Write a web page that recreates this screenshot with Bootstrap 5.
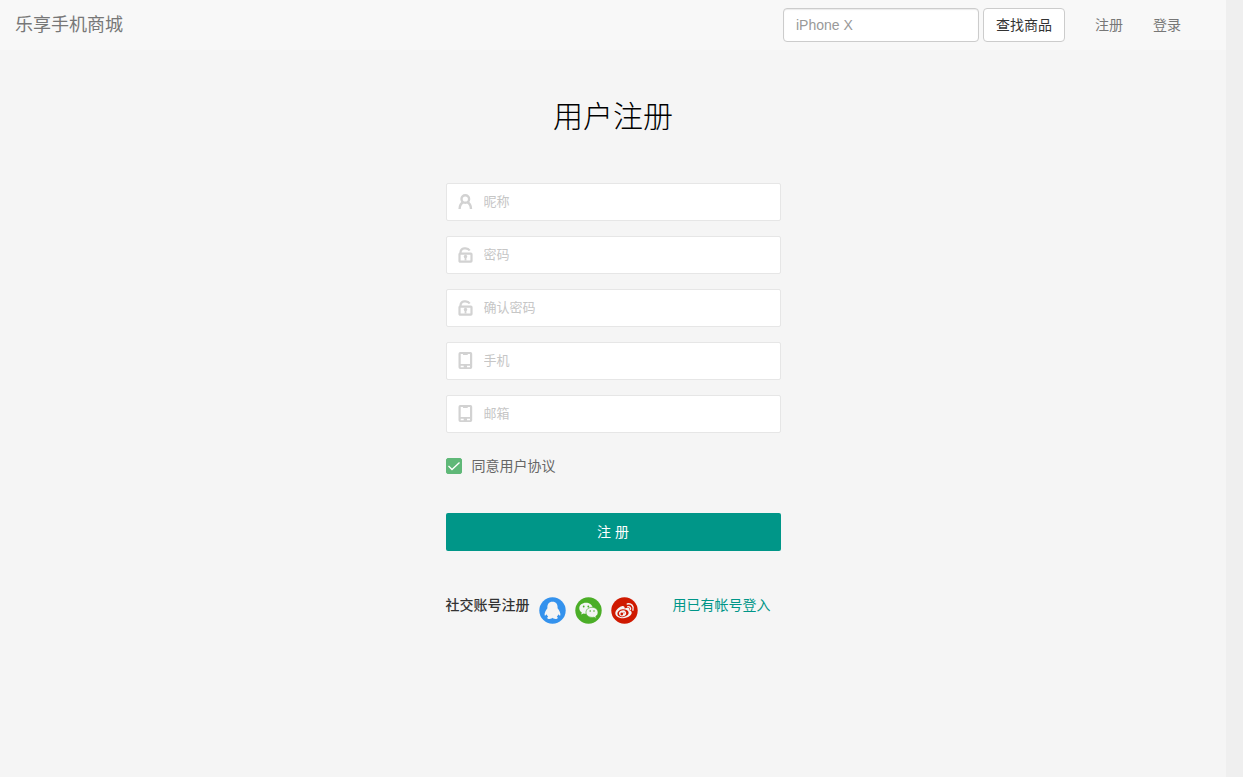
<!DOCTYPE html>
<html lang="zh-CN">
<head>
<meta charset="utf-8">
<meta name="viewport" content="width=device-width, initial-scale=1">
<title>用户注册</title>
<link href="https://cdn.jsdelivr.net/npm/bootstrap@5.3.0/dist/css/bootstrap.min.css" rel="stylesheet">
<style>
body{background:#efefef;color:#333;font:14px/20px "Liberation Sans","Noto Sans CJK SC",sans-serif}
.page-shell{margin-right:17px;background:#f5f5f5}
.topbar{background:#f8f8f8;min-height:50px;padding:0 30px 0 15px}
.topbar .navbar-brand{font-size:18px;line-height:20px;color:#777;padding:0}
.topbar .navbar-nav .nav-link{color:#777;padding:15px;font-size:14px}
.search-form{margin-right:15px}
.search-box{width:196px}
.search-box,.search-btn{height:34px;font-size:14px;padding:6px 12px;line-height:20px;border:1px solid #ccc;border-radius:4px}
.search-box{box-shadow:inset 0 1px 1px rgba(0,0,0,.08)}
.search-box::placeholder{color:#999}
.search-btn,.search-btn:hover{background:#fff;color:#333;border-color:#ccc}
.register{width:100%;max-width:375px;padding:0 20px}
.register h1{font-size:30px;line-height:36px;font-weight:300;color:#000;margin:49px 0 48px}
.field-row{height:38px;background:#fff;border:1px solid #e6e6e6;border-radius:2px;margin-bottom:15px}
.field-row label{flex:0 0 37px;padding-left:10px;color:#d2d2d2}
.field-row svg{width:16px;height:20px;display:block}
.field-row .form-control{font-size:13px;line-height:20px;padding:0 10px 0 0;color:#333}
.field-row .form-control::placeholder{color:#c6c6c6}
.agree{margin-top:23px;gap:10px;color:#666}
.agree .form-check-input{width:16px;height:16px;border-radius:2px;margin:0}
.agree .form-check-input:checked{border-color:#5fb878;background:#5fb878 url("data:image/svg+xml,%3Csvg xmlns='http://www.w3.org/2000/svg' viewBox='0 0 16 16'%3E%3Cpath d='M2.500 8l3.500 3.500 7.500-7' fill='none' stroke='white' stroke-width='1.3'/%3E%3C/svg%3E") center/16px no-repeat}
.submit-btn,.submit-btn:hover{height:38px;background:#009688;color:#fff;border:0;border-radius:2px;font-size:14px;padding:0;margin-top:37px}
.social{margin-top:44px}
.social-title{font-weight:500;margin-right:9px}
.social-links{gap:9px;margin-top:2px}
.social-links svg{width:27px;height:27px;display:block}
.login-link{color:#009688;text-decoration:none;margin-right:10px}
</style>
</head>
<body>
<div class="page-shell min-vh-100">
<nav class="navbar navbar-expand topbar">
  <a class="navbar-brand" href="#">乐享手机商城</a>
  <div class="d-flex ms-auto align-items-center">
    <form class="d-flex gap-1 search-form" role="search">
      <input class="form-control search-box" type="search" placeholder="iPhone X" aria-label="搜索商品">
      <button class="btn search-btn text-nowrap" type="button">查找商品</button>
    </form>
    <div class="navbar-nav">
      <a class="nav-link" href="#">注册</a>
      <a class="nav-link" href="#">登录</a>
    </div>
  </div>
</nav>
<svg class="d-none" aria-hidden="true">
  <symbol id="i-user" viewBox="0 0 16 20"><g fill="none" stroke="currentColor" stroke-width="2.4"><circle cx="8.300" cy="7" r="3.800"/><path d="M2.600 17C2.700 13.500 4 11.300 6.300 10.200M14 17C13.900 13.500 12.600 11.300 10.300 10.200"/></g></symbol>
  <symbol id="i-lock" viewBox="0 0 16 20"><g fill="none" stroke="currentColor" stroke-width="2.200"><rect x="2.500" y="8.600" width="12" height="8" rx=".6"/><path d="M3.500 9V7.500C3.500 2.700 10.500 2 12.700 5.500"/></g><circle cx="8.500" cy="11.500" r="1.700" fill="currentColor"/><path d="M7.600 12h1.800v3.500H7.600z" fill="currentColor"/></symbol>
  <symbol id="i-phone" viewBox="0 0 16 20"><path fill="currentColor" fill-rule="evenodd" d="M3.200 1h10.300q1.700 0 1.700 1.700v13.600q0 1.700-1.700 1.700H3.200Q1.500 18 1.500 16.300V2.700Q1.500 1 3.200 1M3.700 3v10H13V3h-2.300v1H6V3zM3.700 14.700v1.500h3V14.700zM10 14.700v1.500h3V14.700z"/></symbol>
</svg>
<main class="register mx-auto overflow-hidden">
  <h1 class="text-center">用户注册</h1>
  <form>
    <div class="field-row d-flex align-items-center"><label for="nick" aria-label="昵称"><svg><use href="#i-user"/></svg></label><input id="nick" class="form-control border-0 bg-transparent" type="text" placeholder="昵称"></div>
    <div class="field-row d-flex align-items-center"><label for="pass" aria-label="密码"><svg><use href="#i-lock"/></svg></label><input id="pass" class="form-control border-0 bg-transparent" type="password" placeholder="密码"></div>
    <div class="field-row d-flex align-items-center"><label for="pass2" aria-label="确认密码"><svg><use href="#i-lock"/></svg></label><input id="pass2" class="form-control border-0 bg-transparent" type="password" placeholder="确认密码"></div>
    <div class="field-row d-flex align-items-center"><label for="phone" aria-label="手机"><svg><use href="#i-phone"/></svg></label><input id="phone" class="form-control border-0 bg-transparent" type="tel" placeholder="手机"></div>
    <div class="field-row d-flex align-items-center"><label for="mail" aria-label="邮箱"><svg><use href="#i-phone"/></svg></label><input id="mail" class="form-control border-0 bg-transparent" type="email" placeholder="邮箱"></div>
    <div class="agree d-flex align-items-center"><input class="form-check-input" type="checkbox" id="agree" checked><label for="agree">同意用户协议</label></div>
    <button class="btn submit-btn w-100" type="button">注 册</button>
  </form>
  <div class="social d-flex align-items-start text-nowrap">
    <span class="social-title">社交账号注册</span>
    <div class="social-links d-flex">
      <a href="#" aria-label="QQ"><svg viewBox="0 0 27 27"><circle cx="13.500" cy="13.500" r="13.200" fill="#3492ed"/><path fill="#f4f4f4" d="M13.500 4.800C9.800 4.800 8.200 7.500 8.400 11.200C6.900 13 5.400 15.600 5.600 18C5.800 19.200 6.900 18.200 7.500 17.200C7.900 18.200 8.400 19 9.200 19.700C7.800 20.200 7.800 21.900 10.500 21.900C12 21.900 13 21.300 13.500 20.700C14 21.300 15 21.900 16.500 21.900C19.200 21.900 19.200 20.200 17.800 19.700C18.600 19 19.100 18.200 19.500 17.200C20.100 18.200 21.200 19.200 21.400 18C21.600 15.600 20.100 13 18.600 11.200C18.800 7.500 17.200 4.800 13.500 4.800"/></svg></a>
      <a href="#" aria-label="微信"><svg viewBox="0 0 27 27"><circle cx="13.500" cy="13.500" r="13.200" fill="#4bae27"/><path fill="#f4f4f4" d="M11 5.800C7.200 5.800 4.300 8.200 4.300 11.200C4.300 13.100 5.300 14.600 6.800 15.600L6.200 17.600L8.600 16.400C9.800 16.700 10.800 16.800 12 16.600C17 17 18.300 11.300 17.600 10.300C17 7.700 14.300 5.800 11 5.800"/><path fill="#f4f4f4" stroke="#4bae27" stroke-width=".7" d="M17 10.300C13.500 10.300 11 12.500 11 15.400C11 18.900 15 21.100 19 20.200L21.300 21.400L20.800 19.300C22.300 18.300 23 17 23 15.400C23 12.500 20.300 10.300 17 10.300"/><g fill="#4bae27"><circle cx="8.700" cy="9.500" r=".9"/><circle cx="13.300" cy="9.500" r=".9"/><circle cx="15.200" cy="14" r=".8"/><circle cx="19" cy="14" r=".8"/></g></svg></a>
      <a href="#" aria-label="微博"><svg viewBox="0 0 27 27"><circle cx="13.500" cy="13.500" r="13.200" fill="#cf1900"/><path fill="#f4f4f4" d="M10.800 9.200C8 9.800 4.200 13.500 4.300 16.200C4.500 19.500 8.500 21.300 12.300 21.200C17.200 21 20.700 18.200 20.700 15.800C20.700 14.200 19.200 13.500 18.300 13.200C18.900 10.800 17 10.100 13.600 11.500C13.900 9.700 13 8.800 10.800 9.200"/><ellipse cx="12" cy="16.200" rx="5.700" ry="3.900" fill="#cf1900" transform="rotate(-8 12 16.200)"/><ellipse cx="11.600" cy="16.400" rx="3.600" ry="2.900" fill="#f4f4f4" transform="rotate(-15 11.600 16.400)"/><circle cx="10.800" cy="17" r="1.400" fill="#cf1900"/><circle cx="13" cy="15.800" r=".6" fill="#cf1900"/><path d="M16.800 9.700C18.800 9.400 20 10.800 19.400 12.600M16.300 7C20.300 6 23.300 9.500 21.900 13.200" fill="none" stroke="#f4f4f4" stroke-width="1.400" stroke-linecap="round"/></svg></a>
    </div>
    <a class="login-link ms-auto" href="#">用已有帐号登入</a>
  </div>
</main>
</div>
<script src="https://cdn.jsdelivr.net/npm/bootstrap@5.3.0/dist/js/bootstrap.bundle.min.js"></script>
</body>
</html>
